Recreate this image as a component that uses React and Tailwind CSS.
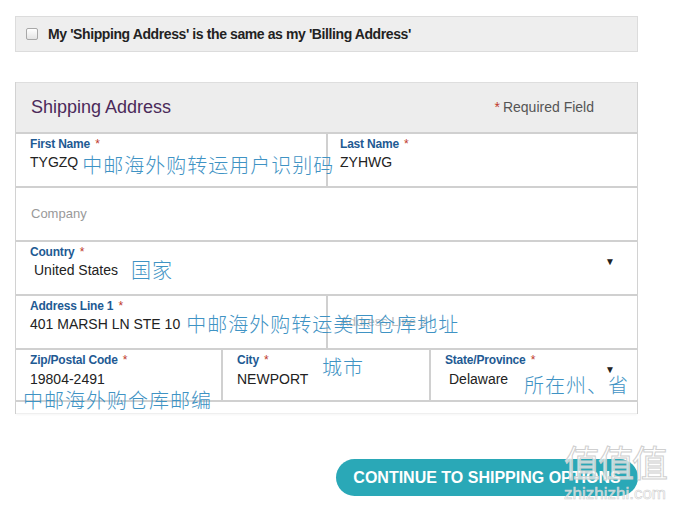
import React from 'react';

const sans = "font-['Liberation_Sans',Arial,sans-serif]";
const cjk = "font-['Noto_Sans_CJK_SC',sans-serif] text-[20px] leading-[20px] tracking-[1px] text-[#3f93c4] font-light whitespace-nowrap";
const value = "text-[14px] leading-[16px] text-[#222] whitespace-nowrap";

function Label({ children }) {
    return (
        <div className="text-[12px] leading-[14px] font-bold text-[#1e5a93] tracking-[-0.2px] whitespace-nowrap">
            {children} <span className="text-[#c0392b] font-normal ml-[2px]">*</span>
        </div>
    );
}

export default function App() {
    return (
        <div className={`relative w-[676px] h-[507px] bg-white overflow-hidden ${sans}`}>
            <div className="pt-[16px] pl-[15px]">
                <div className="w-[623px] h-[36px] bg-[#eeeeee] border border-[#dcdcdc] flex items-center pl-[10px] gap-[10px]">
                    <span className="w-[12px] h-[12px] rounded-[2px] border border-[#a8a8a8] bg-gradient-to-b from-white to-[#e4e4e4]" />
                    <span className="text-[14px] font-bold text-[#222] tracking-[-0.4px]">
                        My 'Shipping Address' is the same as my 'Billing Address'
                    </span>
                </div>

                <div className="mt-[30px] w-[623px] border-x border-[#d2d2d2]">
                    <div className="h-[50px] bg-[#ededed] border-t border-[#dedede] flex items-center justify-between pl-[15px] pr-[43px]">
                        <span className="text-[18px] text-[#4b2a5a]">Shipping Address</span>
                        <span className="text-[14px] text-[#555]">
                            <span className="text-[#c0392b] mr-[3px]">*</span>Required Field
                        </span>
                    </div>

                    <div className="flex h-[54px] border-t-2 border-[#d0d0d0]">
                        <div className="w-[312px] border-r-2 border-[#d0d0d0] pl-[14px] pt-[3px]">
                            <Label>First Name</Label>
                            <div className="flex items-start mt-[3px] whitespace-nowrap">
                                <span className={value}>TYGZQ</span>
                                <span className={`${cjk} ml-[4px] mt-[1px]`}>中邮海外购转运用户识别码</span>
                            </div>
                        </div>
                        <div className="flex-1 pl-[12px] pt-[3px]">
                            <Label>Last Name</Label>
                            <div className={`${value} mt-[3px]`}>ZYHWG</div>
                        </div>
                    </div>

                    <div className="flex items-center h-[54px] border-t-2 border-[#d0d0d0] pl-[15px]">
                        <span className="text-[13px] text-[#999]">Company</span>
                    </div>

                    <div className="relative h-[54px] border-t-2 border-[#d0d0d0] pl-[14px] pt-[3px]">
                        <Label>Country</Label>
                        <div className="flex items-center mt-[3px] pl-[4px] h-[16px]">
                            <span className={value}>United States</span>
                            <span className={`${cjk} ml-[13px]`}>国家</span>
                        </div>
                        <div className="absolute top-[12px] right-[22px] text-[10px] text-[#222]">▼</div>
                    </div>

                    <div className="flex h-[54px] border-t-2 border-[#d0d0d0]">
                        <div className="w-[312px] shrink-0 border-r-2 border-[#d0d0d0] pl-[14px] pt-[3px]">
                            <Label>Address Line 1</Label>
                            <div className="flex items-center mt-[3px] h-[16px] whitespace-nowrap">
                                <span className={`${value} shrink-0`}>401 MARSH LN STE 10</span>
                                <span className={`${cjk} ml-[6px] relative z-10 shrink-0`}>中邮海外购转运美国仓库地址</span>
                            </div>
                        </div>
                        <div className="flex-1 flex items-center pl-[12px]">
                            <span className="text-[13px] text-[#bbb]">Address Line 2</span>
                        </div>
                    </div>

                    <div className="flex h-[54px] border-y-2 border-[#d0d0d0]">
                        <div className="relative w-[207px] border-r-2 border-[#d0d0d0] pl-[14px] pt-[3px]">
                            <Label>Zip/Postal Code</Label>
                            <div className={`${value} mt-[4px]`}>19804-2491</div>
                            <span className={`${cjk} absolute left-[7px] top-[40px] z-10`}>中邮海外购仓库邮编</span>
                        </div>
                        <div className="relative w-[208px] border-r-2 border-[#d0d0d0] pl-[14px] pt-[3px]">
                            <Label>City</Label>
                            <div className={`${value} mt-[4px]`}>NEWPORT</div>
                            <span className={`${cjk} absolute left-[99px] top-[7px]`}>城市</span>
                        </div>
                        <div className="relative flex-1 pl-[14px] pt-[3px]">
                            <Label>State/Province</Label>
                            <div className={`${value} mt-[4px] pl-[4px]`}>Delaware</div>
                            <span className={`${cjk} absolute left-[93px] top-[25px]`}>所在州、省</span>
                            <div className="absolute top-[12px] right-[22px] text-[10px] text-[#222]">▼</div>
                        </div>
                    </div>
                    <div className="h-[12px] border-b border-[#efefef] shadow-[0_1px_2px_rgba(0,0,0,0.04)]" />
                </div>

                <div className="flex justify-end w-[623px] mt-[45px]">
                    <button className="w-[302px] h-[37px] rounded-full bg-[#2aa8b7] text-white text-[16px] font-bold">
                        CONTINUE TO SHIPPING OPTIONS
                    </button>
                </div>
            </div>

            <div className="absolute left-[564px] top-[443px] flex flex-col items-center pointer-events-none">
                <span className="font-['Noto_Sans_CJK_SC',sans-serif] text-[36px] leading-none tracking-[-2px] text-white/70 [-webkit-text-stroke:1px_#cfcfcf]">值值值</span>
                <span className="text-[17px] leading-none mt-[6px] text-white/70 [-webkit-text-stroke:0.6px_#cfcfcf]">zhizhizhi.com</span>
            </div>
        </div>
    );
}
